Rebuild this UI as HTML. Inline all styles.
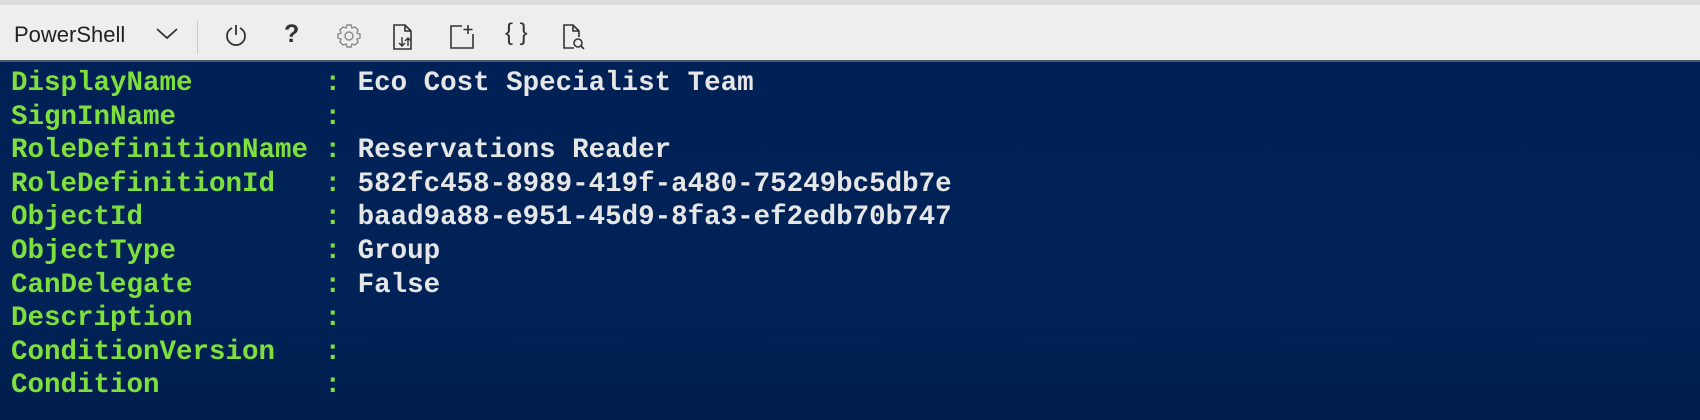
<!DOCTYPE html>
<html><head><meta charset="utf-8"><style>
html,body{margin:0;padding:0;width:1700px;height:420px;overflow:hidden;background:#002256;}
.top{position:absolute;left:0;top:0;width:1700px;height:5px;background:#dcdcdc;}
.bar{position:absolute;left:0;top:5px;width:1700px;height:55px;background:#eeeeee;border-bottom:2px solid #4a5a70;}
.ps{position:absolute;left:14px;top:17px;font:22px "Liberation Sans",sans-serif;color:#222;}
.sep{position:absolute;left:197px;top:15px;width:1px;height:34px;background:#c8c8c8;}
.ic{position:absolute;top:18px;}
.term{position:absolute;left:0;top:62px;width:1700px;height:358px;background:linear-gradient(#002155,#002256 70%,#001e4d);}
pre{position:absolute;left:11px;top:5px;margin:0;font:bold 27.5px/33.6px "Liberation Mono",monospace;color:#e6e6e6;}
.g{color:#7ee03c;}
</style></head><body>
<div class="top"></div>
<div class="bar">
<div class="ps">PowerShell</div>
<svg class="ic" style="left:155px;top:22px" width="24" height="14" viewBox="0 0 24 14"><path d="M2 2 L12 11 L22 2" fill="none" stroke="#333" stroke-width="1.8"/></svg>
<div class="sep"></div>
<svg class="ic" style="left:224px" width="24" height="26" viewBox="0 0 24 26"><path d="M8 5 A9 9 0 1 0 16 5" fill="none" stroke="#333" stroke-width="1.8"/><path d="M12 2 V12" stroke="#333" stroke-width="1.8"/></svg>
<div class="ic" style="left:284px;top:15px;font:bold 25px 'Liberation Sans',sans-serif;color:#333">?</div>
<svg class="ic" style="left:336px" width="26" height="26" viewBox="0 0 26 26"><circle cx="13" cy="13" r="4" fill="none" stroke="#888" stroke-width="1.4"/><path d="M11 2h4l1 3 3-1 3 3-1 3 3 1v4l-3 1 1 3-3 3-3-1-1 3h-4l-1-3-3 1-3-3 1-3-3-1v-4l3-1-1-3 3-3 3 1z" fill="none" stroke="#888" stroke-width="1.4"/></svg>
<svg class="ic" style="left:391px" width="26" height="28" viewBox="0 0 26 28"><path d="M3 2h11l6 6v18H3z M14 2v6h6" fill="none" stroke="#333" stroke-width="1.6"/><path d="M11 14v9 M8 20l3 3 3-3 M17 23v-8 M14 18l3-3 3 3" fill="none" stroke="#333" stroke-width="1.4"/></svg>
<svg class="ic" style="left:448px" width="28" height="28" viewBox="0 0 28 28"><path d="M14 3H3v22h22V11" fill="none" stroke="#333" stroke-width="1.6"/><path d="M20 2v9 M15.5 6.5h9" stroke="#333" stroke-width="1.6"/></svg>
<div class="ic" style="left:505px;top:14px;font:24px 'Liberation Sans',sans-serif;color:#333">{ }</div>
<svg class="ic" style="left:561px" width="26" height="28" viewBox="0 0 26 28"><path d="M13 25H3V2h9l6 6v6 M12 2v6h6" fill="none" stroke="#333" stroke-width="1.6"/><circle cx="17" cy="20" r="4" fill="none" stroke="#333" stroke-width="1.6"/><path d="M20 23l3 3" stroke="#333" stroke-width="1.6"/></svg>
</div>
<div class="term"><pre><span class="g">DisplayName        :</span> Eco Cost Specialist Team
<span class="g">SignInName         :</span>
<span class="g">RoleDefinitionName :</span> Reservations Reader
<span class="g">RoleDefinitionId   :</span> 582fc458-8989-419f-a480-75249bc5db7e
<span class="g">ObjectId           :</span> baad9a88-e951-45d9-8fa3-ef2edb70b747
<span class="g">ObjectType         :</span> Group
<span class="g">CanDelegate        :</span> False
<span class="g">Description        :</span>
<span class="g">ConditionVersion   :</span>
<span class="g">Condition          :</span></pre></div>
</body></html>
